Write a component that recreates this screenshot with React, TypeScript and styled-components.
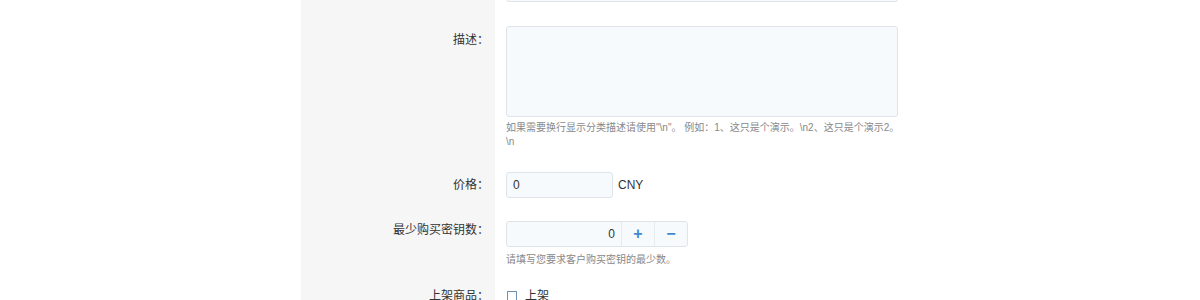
import * as React from "react";
import styled, { createGlobalStyle } from "styled-components";

const GlobalStyle = createGlobalStyle`
  body {
    margin: 0;
    background: #fff;
    font-family: "Liberation Sans", "Noto Sans CJK SC", sans-serif;
    color: #333;
    overflow: hidden;
  }
`;

const Form = styled.div`
  width: 610px;
  margin: -26px 0 0 301px;
`;

const Row = styled.div`
  display: grid;
  grid-template-columns: 194px 1fr;
`;

const Label = styled.div<{ $top: number }>`
  background: #f6f6f6;
  text-align: right;
  padding: ${(p) => p.$top}px 6px 0 0;
  font-size: 12px;
  line-height: 16px;
  color: #333;
`;

const Field = styled.div<{ $bottom: number }>`
  padding: 0 0 ${(p) => p.$bottom}px 11px;
  display: flex;
  flex-direction: column;
  align-items: flex-start;
`;

const TextInput = styled.input<{ $width: number; $height?: number }>`
  box-sizing: border-box;
  width: ${(p) => p.$width}px;
  height: ${(p) => p.$height ?? 26}px;
  padding: 0 6px;
  border: 1px solid #dfe4ea;
  border-radius: 3px;
  background: #f7fafd;
  font: inherit;
  font-size: 12px;
  color: #333;
  outline: none;
`;

const TextArea = styled.textarea`
  box-sizing: border-box;
  width: 392px;
  height: 91px;
  border: 1px solid #dfe4ea;
  border-radius: 3px;
  background: #f7fafd;
  resize: none;
  outline: none;
  margin: 0;
  display: block;
`;

const Help = styled.div<{ $top: number }>`
  margin-top: ${(p) => p.$top}px;
  width: 397px;
  font-size: 10px;
  line-height: 14px;
  color: #888;
  word-break: break-all;
`;

const Inline = styled.div`
  display: flex;
  align-items: center;
  gap: 5px;
  font-size: 12px;
  color: #333;
`;

const Group = styled.div`
  box-sizing: border-box;
  display: flex;
  width: 182px;
  height: 26px;
  border: 1px solid #dfe4ea;
  border-radius: 3px;
  background: #f7fafd;
  overflow: hidden;
`;

const GroupInput = styled.input`
  flex: 1;
  min-width: 0;
  border: none;
  background: transparent;
  text-align: right;
  padding: 0 6px 0 0;
  font: inherit;
  font-size: 12px;
  color: #333;
  outline: none;
`;

const StepButton = styled.button`
  width: 33px;
  border: none;
  border-left: 1px solid #e6ebf0;
  background: #f7fafd;
  color: #3f89d0;
  font-family: "Liberation Sans", sans-serif;
  font-size: 16px;
  font-weight: bold;
  line-height: 1;
  padding: 0;
  cursor: pointer;
`;

const CheckLine = styled.label`
  display: flex;
  align-items: center;
  gap: 8px;
  padding: 3px 0 0 1px;
  font-size: 12px;
  line-height: 16px;
  color: #333;
`;

const Box = styled.span`
  box-sizing: border-box;
  width: 10px;
  height: 10px;
  border: 1px solid #6f8fb4;
  background: #fff;
`;

export default function App() {
  return (
    <>
      <GlobalStyle />
      <Form>
        <Row>
          <Label $top={6} />
          <Field $bottom={24}>
            <TextInput $width={392} $height={28} defaultValue="" />
          </Field>
        </Row>
        <Row>
          <Label $top={6}>描述：</Label>
          <Field $bottom={23}>
            <TextArea />
            <Help $top={4}>
              如果需要换行显示分类描述请使用"\n"。 例如：1、这只是个演示。\n2、这只是个演示2。\n
            </Help>
          </Field>
        </Row>
        <Row>
          <Label $top={5}>价格：</Label>
          <Field $bottom={23}>
            <Inline>
              <TextInput $width={107} defaultValue="0" />
              <span>CNY</span>
            </Inline>
          </Field>
        </Row>
        <Row>
          <Label $top={1}>最少购买密钥数：</Label>
          <Field $bottom={18}>
            <Group>
              <GroupInput defaultValue="0" />
              <StepButton>+</StepButton>
              <StepButton>−</StepButton>
            </Group>
            <Help $top={6}>请填写您要求客户购买密钥的最少数。</Help>
          </Field>
        </Row>
        <Row>
          <Label $top={3}>上架商品：</Label>
          <Field $bottom={20}>
            <CheckLine>
              <Box />
              上架
            </CheckLine>
          </Field>
        </Row>
      </Form>
    </>
  );
}
